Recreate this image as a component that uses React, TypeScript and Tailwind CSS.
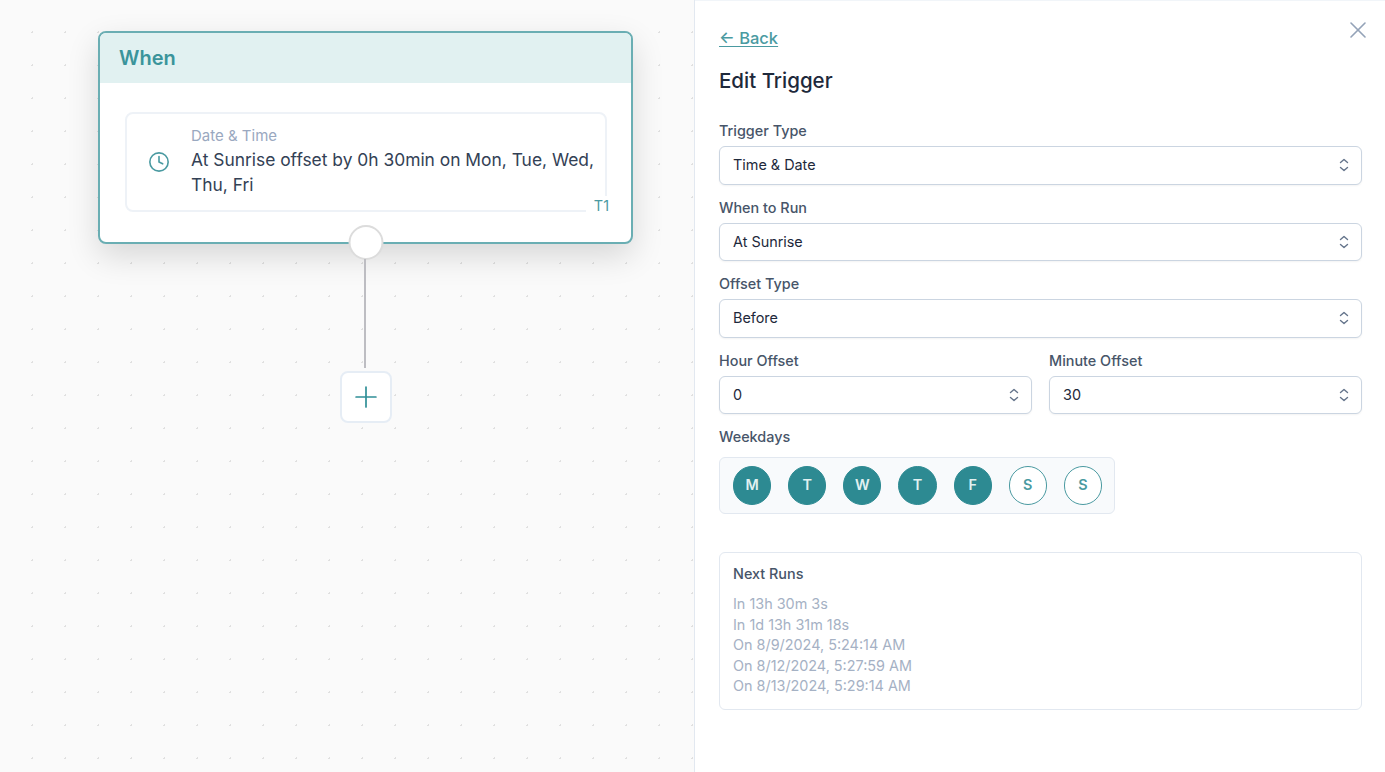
import { Clock, Plus, X } from 'lucide-react';

type Day = {
  label: string;
  active: boolean;
};

const days: Day[] = [
  { label: 'M', active: true },
  { label: 'T', active: true },
  { label: 'W', active: true },
  { label: 'T', active: true },
  { label: 'F', active: true },
  { label: 'S', active: false },
  { label: 'S', active: false },
];

const nextRuns = [
  'In 13h 30m 3s',
  'In 1d 13h 31m 18s',
  'On 8/9/2024, 5:24:14 AM',
  'On 8/12/2024, 5:27:59 AM',
  'On 8/13/2024, 5:29:14 AM',
];

function SelectField({ label, value }: { label: string; value: string }) {
  return (
    <div className="flex flex-col">
      <span className="h-[21px] text-[14.4px] leading-[21px] font-medium text-[#475569]">
        {label}
      </span>
      <div className="mt-[5px] flex h-[38.5px] items-center justify-between rounded-md border border-[#cbd5e1] bg-white pr-3 pl-[13px] text-[14.4px] text-[#1e293b] shadow-xs">
        <span>{value}</span>
        <svg width="10" height="16" viewBox="0 0 10 16" fill="none" stroke="#64748b" strokeWidth="1.4" strokeLinecap="round" strokeLinejoin="round">
          <path d="M1.5 5.5 5 2.5l3.5 3" />
          <path d="M1.5 10.5l3.5 3 3.5-3" />
        </svg>
      </div>
    </div>
  );
}

export default function App() {
  return (
    <div className="flex h-[772px] w-[1385px] overflow-hidden bg-white font-['Inter',sans-serif]">
      <div className="flex w-[695px] flex-col border-r border-[#e2e8f0] bg-[#fafafa] bg-[radial-gradient(#e0e0e0_1px,transparent_1px)] bg-[size:33px_33px] bg-[position:16px_16px] pt-[31px] pl-[98px]">
        <div className="relative w-[535px] rounded-lg border-2 border-[#6aaeb3] bg-white shadow-[0_12px_32px_rgba(0,0,0,0.14)]">
          <div className="flex h-[50px] items-center rounded-t-md bg-[#e1f1f1] pr-5 pl-[19px] text-xl font-semibold text-[#3a949b]">
            When
          </div>
          <div className="pt-[29px] pr-[24px] pb-[30px] pl-[25px]">
            <div className="relative flex h-[100px] items-center rounded-lg border-2 border-[#eef2f7] bg-white">
              <Clock className="ml-[21px] size-[22px] shrink-0 text-[#4a9aa1]" strokeWidth={1.75} />
              <div className="-mt-[3px] ml-[21px]">
                <div className="text-[15px] leading-[23px] text-[#9aa8c0]">Date &amp; Time</div>
                <div className="text-[17.4px] leading-[25px] text-[#334155]">
                  At Sunrise offset by 0h 30min on Mon, Tue, Wed, Thu, Fri
                </div>
              </div>
              <span className="absolute right-[-4px] bottom-[-6px] bg-white pl-2 text-[14.4px] leading-[20px] text-[#4a9aa1]">
                T1
              </span>
            </div>
          </div>
          <div className="absolute bottom-[-18px] left-1/2 size-[35px] -translate-x-1/2 rounded-full border-2 border-[#dcdcdc] bg-white" />
        </div>
        <div className="ml-[266px] h-[109px] w-[2px] translate-y-[15px] bg-[#bdbdc2]" />
        <div className="mt-[2px] ml-[242px] flex size-[52px] translate-y-[16px] items-center justify-center rounded-lg border-2 border-[#e6edf5] bg-white text-[#2f8f97]">
          <Plus className="size-[34px]" strokeWidth={1.2} />
        </div>
      </div>

      <div className="relative flex flex-1 flex-col border-t border-[#f1f5f9] pt-[27px] pr-[23px] pl-6">
        <button className="absolute top-[15px] right-[13px] text-[#94a3b8]">
          <X className="size-7" strokeWidth={1.4} />
        </button>
        <a className="w-fit text-[16.5px] leading-5 font-medium text-[#4a9aa1] underline underline-offset-2">
          ← Back
        </a>
        <h2 className="mt-[19px] text-[20.5px] leading-7 font-medium text-[#1e293b]">Edit Trigger</h2>
        <div className="mt-[25px] flex flex-col gap-3">
          <SelectField label="Trigger Type" value="Time & Date" />
          <SelectField label="When to Run" value="At Sunrise" />
          <SelectField label="Offset Type" value="Before" />
          <div className="grid grid-cols-2 gap-[17px]">
            <SelectField label="Hour Offset" value="0" />
            <SelectField label="Minute Offset" value="30" />
          </div>
          <div className="flex flex-col">
            <span className="h-[21px] text-[14.4px] leading-[21px] font-medium text-[#475569]">Weekdays</span>
            <div className="mt-[10px] flex h-[57px] w-[396px] items-center gap-[17px] rounded-md border border-[#e2e8f0] bg-[#f8fafc] pr-[12px] pl-[13px]">
              {days.map((day, i) => (
                <div
                  key={i}
                  className={`flex size-[38.5px] items-center justify-center rounded-full pb-px text-[14.4px] font-semibold ${
                    day.active
                      ? 'border-[1.5px] border-[#2d8a92] bg-[#2d8a92] text-[#e1f1f1]'
                      : 'border-[1.5px] border-[#4a9aa1] bg-white text-[#4a9aa1]'
                  }`}
                >
                  {day.label}
                </div>
              ))}
            </div>
          </div>
        </div>
        <div className="mt-[38px] h-[158px] rounded-md border border-[#e2e8f0] bg-white px-[13px] pt-[10px]">
          <div className="text-[14.4px] leading-[21px] font-medium text-[#475569]">Next Runs</div>
          <div className="mt-[10px] text-[14.4px] leading-[20.6px] text-[#a5b1c4]">
            {nextRuns.map((run) => (
              <div key={run}>{run}</div>
            ))}
          </div>
        </div>
      </div>
    </div>
  );
}
